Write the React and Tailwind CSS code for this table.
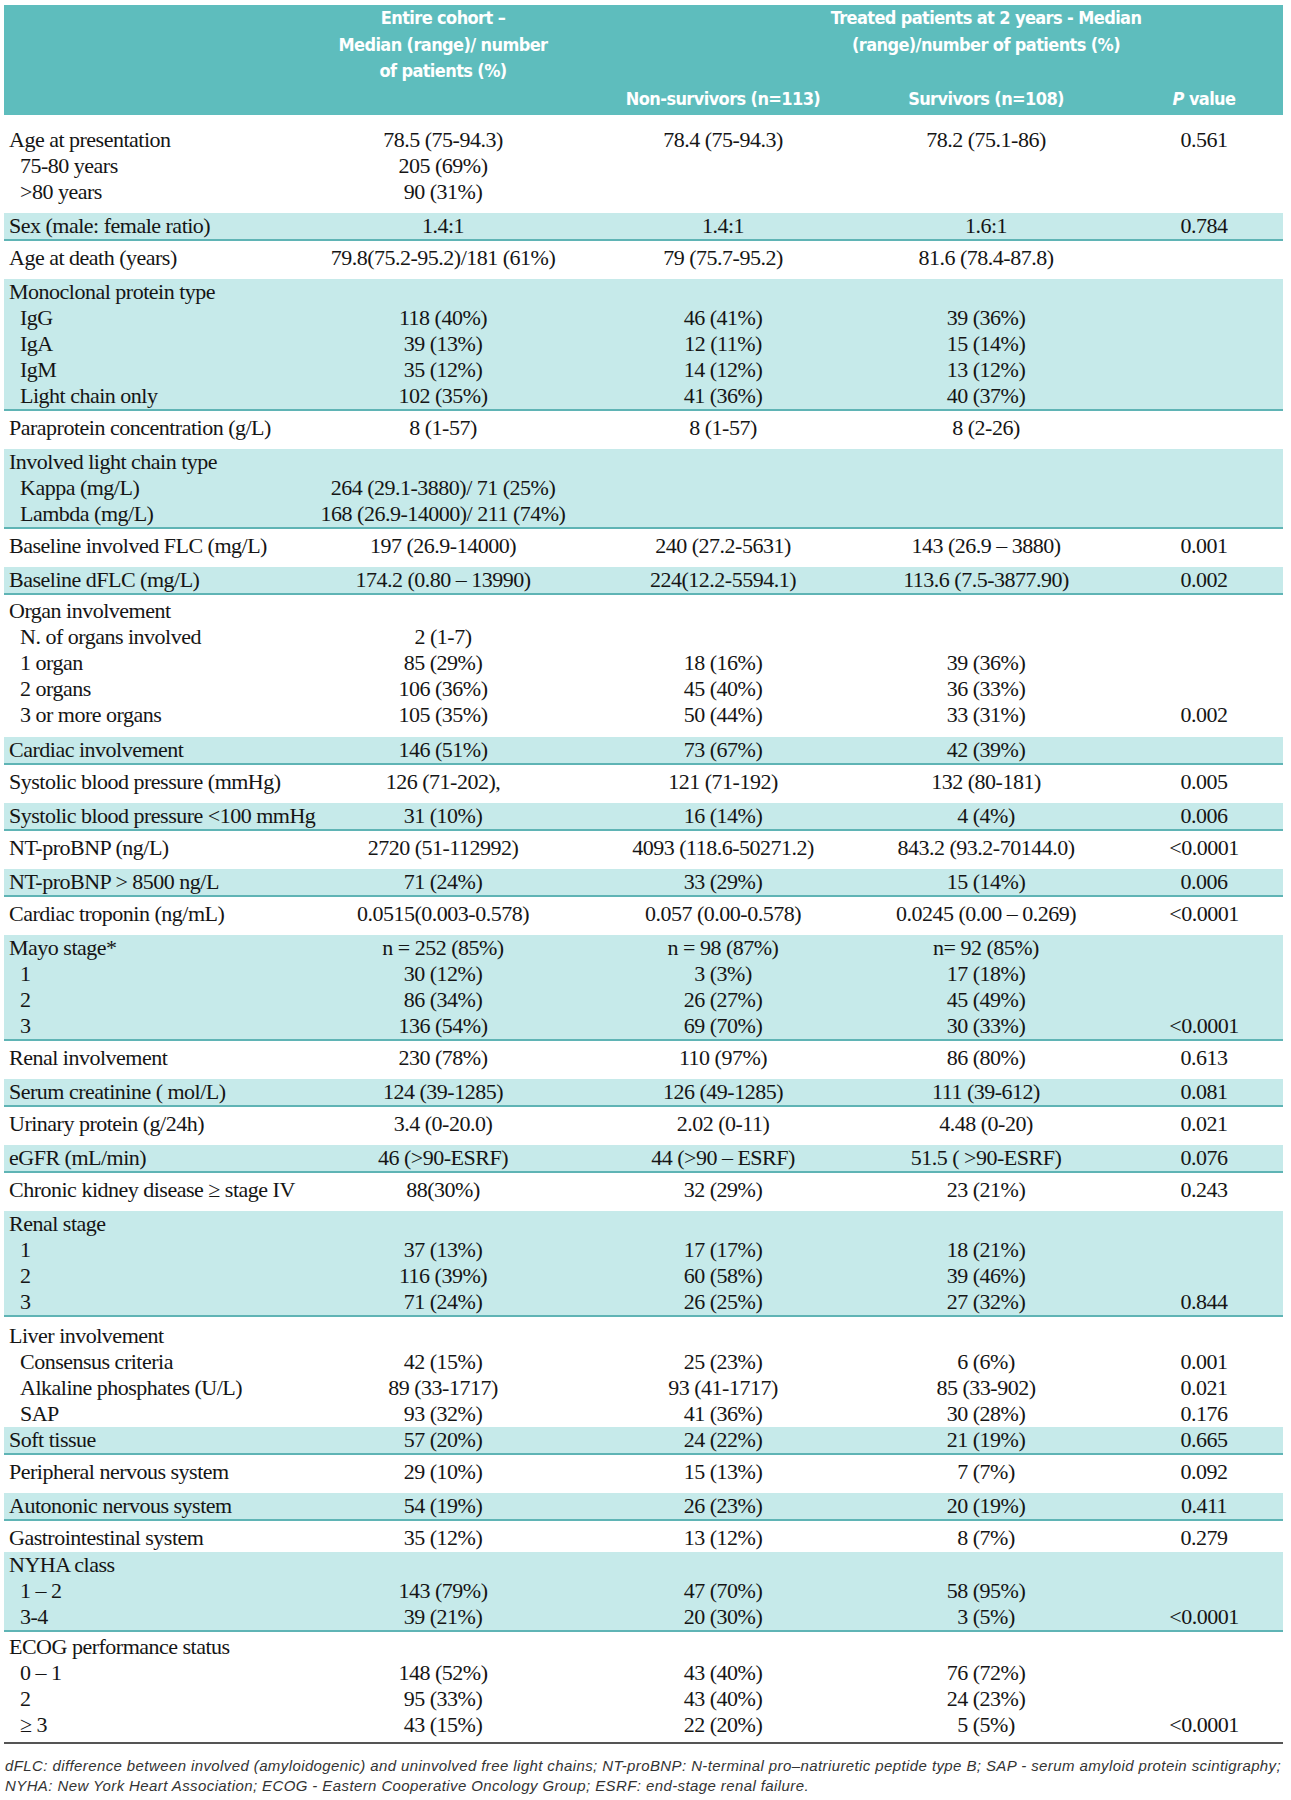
import React from "react";

const cols = "grid grid-cols-[283px_312px_248px_278px_158px]";

// "_" prefix marks an indented sub-item
const rows = [
  {
    tone: "white",
    pad: "pt-[12px] pb-[8px]",
    lines: [
      ["Age at presentation", "78.5 (75-94.3)", "78.4 (75-94.3)", "78.2 (75.1-86)", "0.561"],
      ["_75-80 years", "205 (69%)", "", "", ""],
      ["_>80 years", "90 (31%)", "", "", ""],
    ],
  },
  { tone: "teal", lines: [["Sex (male: female ratio)", "1.4:1", "1.4:1", "1.6:1", "0.784"]] },
  {
    tone: "white",
    lines: [["Age at death (years)", "79.8(75.2-95.2)/181 (61%)", "79 (75.7-95.2)", "81.6 (78.4-87.8)", ""]],
  },
  {
    tone: "teal",
    lines: [
      ["Monoclonal protein type", "", "", "", ""],
      ["_IgG", "118 (40%)", "46 (41%)", "39 (36%)", ""],
      ["_IgA", "39 (13%)", "12 (11%)", "15 (14%)", ""],
      ["_IgM", "35 (12%)", "14 (12%)", "13 (12%)", ""],
      ["_Light chain only", "102 (35%)", "41 (36%)", "40 (37%)", ""],
    ],
  },
  { tone: "white", lines: [["Paraprotein concentration (g/L)", "8 (1-57)", "8 (1-57)", "8 (2-26)", ""]] },
  {
    tone: "teal",
    lines: [
      ["Involved light chain type", "", "", "", ""],
      ["_Kappa (mg/L)", "264 (29.1-3880)/ 71 (25%)", "", "", ""],
      ["_Lambda (mg/L)", "168 (26.9-14000)/ 211 (74%)", "", "", ""],
    ],
  },
  {
    tone: "white",
    lines: [["Baseline involved FLC (mg/L)", "197 (26.9-14000)", "240 (27.2-5631)", "143 (26.9 \u2013 3880)", "0.001"]],
  },
  {
    tone: "teal",
    lines: [["Baseline dFLC (mg/L)", "174.2 (0.80 \u2013 13990)", "224(12.2-5594.1)", "113.6 (7.5-3877.90)", "0.002"]],
  },
  {
    tone: "white",
    pad: "pt-[3px] pb-[9px]",
    lines: [
      ["Organ involvement", "", "", "", ""],
      ["_N. of organs involved", "2 (1-7)", "", "", ""],
      ["_1 organ", "85 (29%)", "18 (16%)", "39 (36%)", ""],
      ["_2 organs", "106 (36%)", "45 (40%)", "36 (33%)", ""],
      ["_3 or more organs", "105 (35%)", "50 (44%)", "33 (31%)", "0.002"],
    ],
  },
  { tone: "teal", lines: [["Cardiac involvement", "146 (51%)", "73 (67%)", "42 (39%)", ""]] },
  {
    tone: "white",
    lines: [["Systolic blood pressure (mmHg)", "126 (71-202),", "121 (71-192)", "132 (80-181)", "0.005"]],
  },
  {
    tone: "teal",
    lines: [["Systolic blood pressure <100 mmHg", "31 (10%)", "16 (14%)", "4 (4%)", "0.006"]],
  },
  {
    tone: "white",
    lines: [["NT-proBNP (ng/L)", "2720 (51-112992)", "4093 (118.6-50271.2)", "843.2 (93.2-70144.0)", "<0.0001"]],
  },
  { tone: "teal", lines: [["NT-proBNP > 8500 ng/L", "71 (24%)", "33 (29%)", "15 (14%)", "0.006"]] },
  {
    tone: "white",
    lines: [
      ["Cardiac troponin (ng/mL)", "0.0515(0.003-0.578)", "0.057 (0.00-0.578)", "0.0245 (0.00 \u2013 0.269)", "<0.0001"],
    ],
  },
  {
    tone: "teal",
    lines: [
      ["Mayo stage*", "n = 252 (85%)", "n = 98 (87%)", "n= 92 (85%)", ""],
      ["_1", "30 (12%)", "3 (3%)", "17 (18%)", ""],
      ["_2", "86 (34%)", "26 (27%)", "45 (49%)", ""],
      ["_3", "136 (54%)", "69 (70%)", "30 (33%)", "<0.0001"],
    ],
  },
  { tone: "white", lines: [["Renal involvement", "230 (78%)", "110 (97%)", "86 (80%)", "0.613"]] },
  {
    tone: "teal",
    lines: [["Serum creatinine ( mol/L)", "124 (39-1285)", "126 (49-1285)", "111 (39-612)", "0.081"]],
  },
  {
    tone: "white",
    lines: [["Urinary protein (g/24h)", "3.4 (0-20.0)", "2.02 (0-11)", "4.48 (0-20)", "0.021"]],
  },
  {
    tone: "teal",
    lines: [["eGFR (mL/min)", "46 (>90-ESRF)", "44 (>90 \u2013 ESRF)", "51.5 ( >90-ESRF)", "0.076"]],
  },
  {
    tone: "white",
    lines: [["Chronic kidney disease \u2265 stage IV", "88(30%)", "32 (29%)", "23 (21%)", "0.243"]],
  },
  {
    tone: "teal",
    lines: [
      ["Renal stage", "", "", "", ""],
      ["_1", "37 (13%)", "17 (17%)", "18 (21%)", ""],
      ["_2", "116 (39%)", "60 (58%)", "39 (46%)", ""],
      ["_3", "71 (24%)", "26 (25%)", "27 (32%)", "0.844"],
    ],
  },
  {
    tone: "white",
    pad: "pt-[6px] pb-0",
    lines: [
      ["Liver involvement", "", "", "", ""],
      ["_Consensus criteria", "42 (15%)", "25 (23%)", "6 (6%)", "0.001"],
      ["_Alkaline phosphates (U/L)", "89 (33-1717)", "93 (41-1717)", "85 (33-902)", "0.021"],
      ["_SAP", "93 (32%)", "41 (36%)", "30 (28%)", "0.176"],
    ],
  },
  { tone: "teal", lines: [["Soft tissue", "57 (20%)", "24 (22%)", "21 (19%)", "0.665"]] },
  { tone: "white", lines: [["Peripheral nervous system", "29 (10%)", "15 (13%)", "7 (7%)", "0.092"]] },
  { tone: "teal", lines: [["Autononic nervous system", "54 (19%)", "26 (23%)", "20 (19%)", "0.411"]] },
  {
    tone: "white",
    pad: "pt-[4px] pb-[1px]",
    lines: [["Gastrointestinal system", "35 (12%)", "13 (12%)", "8 (7%)", "0.279"]],
  },
  {
    tone: "teal",
    lines: [
      ["NYHA class", "", "", "", ""],
      ["_1 \u2013 2", "143 (79%)", "47 (70%)", "58 (95%)", ""],
      ["_3-4", "39 (21%)", "20 (30%)", "3 (5%)", "<0.0001"],
    ],
  },
  {
    tone: "last",
    lines: [
      ["ECOG performance status", "", "", "", ""],
      ["_0 \u2013 1", "148 (52%)", "43 (40%)", "76 (72%)", ""],
      ["_2", "95 (33%)", "43 (40%)", "24 (23%)", ""],
      ["_\u2265 3", "43 (15%)", "22 (20%)", "5 (5%)", "<0.0001"],
    ],
  },
];

function Line({ cells }) {
  const [label, ...vals] = cells;
  const sub = label.startsWith("_");
  return (
    <div className={`${cols} h-[26px] leading-[26px]`}>
      <div className={sub ? "pl-[16px] whitespace-nowrap" : "pl-[5px] whitespace-nowrap"}>
        {sub ? label.slice(1) : label}
      </div>
      {vals.map((v, i) => (
        <div key={i} className="flex justify-center whitespace-nowrap">
          {v}
        </div>
      ))}
    </div>
  );
}

function Row({ tone, pad, lines }) {
  let cls = "bg-white pt-[4px] pb-[8px]";
  if (tone === "teal") cls = "bg-[#c6eaea] border-b-2 border-[#5fb4b5]";
  if (tone === "last") cls = "bg-white pt-[2px] pb-[4px] border-b-2 border-[#555555]";
  if (pad) cls = `bg-white ${pad}`;
  return (
    <div className={cls}>
      {lines.map((l, i) => (
        <Line key={i} cells={l} />
      ))}
    </div>
  );
}

export default function App() {
  return (
    <div className="bg-white min-h-screen pt-[5px] px-[4px]">
      <div className="w-[1279px]">
        {/* Header */}
        <div
          className={`${cols} h-[110px] bg-[#5ebdbd] text-white font-bold text-[18px] tracking-[-0.6px] leading-[26.5px] font-['Liberation_Sans_Narrow','DejaVu_Sans_Condensed','Liberation_Sans',sans-serif]`}
        >
          <div />
          <div className="flex flex-col items-center whitespace-nowrap">
            <span>Entire cohort –</span>
            <span>Median (range)/ number</span>
            <span>of patients (%)</span>
          </div>
          <div className="flex flex-col justify-end items-center pb-[3px] whitespace-nowrap">
            Non-survivors (n=113)
          </div>
          <div className="flex flex-col justify-between items-center pb-[3px] whitespace-nowrap">
            <div className="flex flex-col items-center">
              <span>Treated patients at 2 years - Median</span>
              <span>(range)/number of patients (%)</span>
            </div>
            <span>Survivors (n=108)</span>
          </div>
          <div className="flex flex-col justify-end items-center pb-[3px] whitespace-nowrap">
            <span>
              <i>P</i> value
            </span>
          </div>
        </div>

        {/* Body */}
        <div className="text-[22px] tracking-[-0.5px] text-[#151515] font-['Liberation_Serif','Times_New_Roman',serif]">
          {rows.map((r, i) => (
            <Row key={i} {...r} />
          ))}
        </div>

        {/* Footnote */}
        <div className="mt-[12px] text-[15px] tracking-[0.4px] leading-[20px] italic text-[#333333] font-['Liberation_Sans',Arial,sans-serif] pl-[1px]">
          <p className="whitespace-nowrap">
            dFLC: difference between involved (amyloidogenic) and uninvolved free light chains; NT-proBNP: N-terminal
            pro–natriuretic peptide type B; SAP - serum amyloid protein scintigraphy;
          </p>
          <p>NYHA: New York Heart Association; ECOG - Eastern Cooperative Oncology Group; ESRF: end-stage renal failure.</p>
        </div>
      </div>
    </div>
  );
}
